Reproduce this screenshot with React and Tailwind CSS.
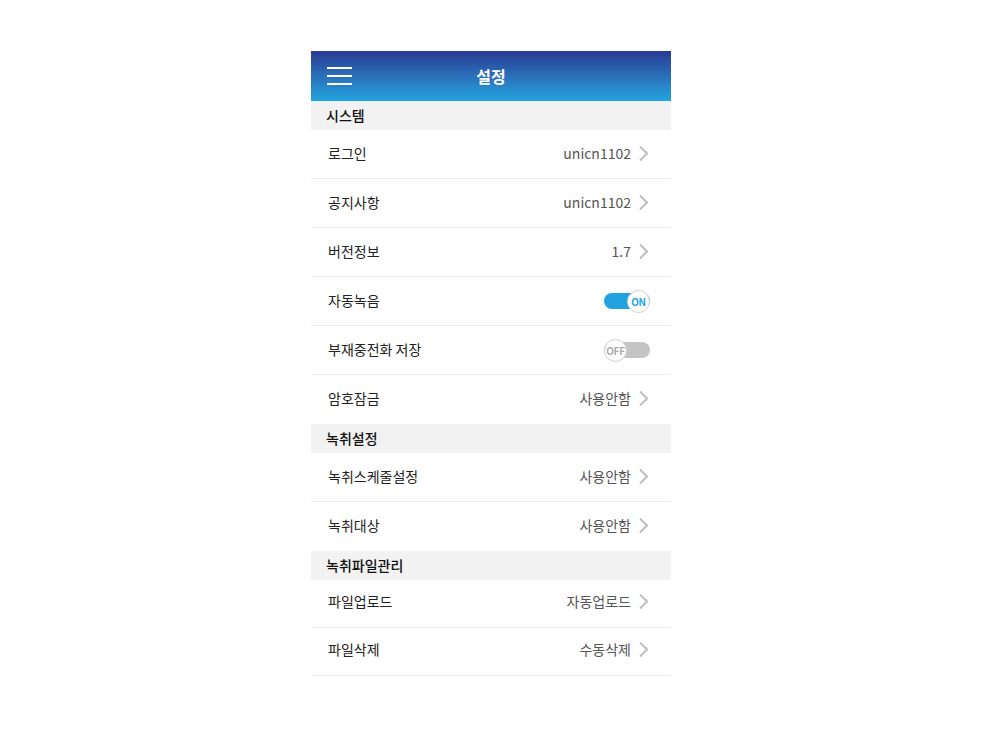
const font = { fontFamily: "'Noto Sans CJK KR', 'Noto Sans', sans-serif" };

function Chevron() {
  return (
    <svg width="11" height="17" viewBox="0 0 11 17" fill="none">
      <path d="M2 1.5 L9 8.5 L2 15.5" stroke="#bdbdbd" strokeWidth="2" />
    </svg>
  );
}

function Toggle({ on }) {
  return (
    <div className="relative w-[46px] h-[23px] flex items-center">
      <div
        className={`w-full h-[16px] rounded-full ${on ? "bg-[#22a3e0]" : "bg-[#c4c4c4]"}`}
      />
      <div
        className={`absolute top-0 ${on ? "right-0" : "left-0"} w-[23px] h-[23px] rounded-full bg-white border border-[#d0d0d0] flex items-center justify-center text-[10px] font-bold tracking-tight ${on ? "text-[#22a3e0]" : "text-[#aaa]"}`}
      >
        {on ? "ON" : "OFF"}
      </div>
    </div>
  );
}

function Row({ label, value, toggle, last, tight }) {
  return (
    <div
      className={`flex items-center justify-between pl-[17px] pr-[22px] ${tight ? "h-[48px] pb-[5px]" : "h-[49px] pb-[2px]"} ${last ? "" : "border-b border-[#ececec]"}`}
    >
      <span className="text-[14px] text-[#222]">{label}</span>
      {toggle !== undefined ? (
        <div className="mr-[-1px] mt-[2px]">
          <Toggle on={toggle} />
        </div>
      ) : (
        <div className="flex items-center gap-[7px]">
          <span className="text-[14px] text-[#555]">{value}</span>
          <Chevron />
        </div>
      )}
    </div>
  );
}

function Section({ title }) {
  return (
    <div className="h-[29px] bg-[#f2f2f2] flex items-center pl-[15px] pb-[1px] text-[14px] font-medium text-[#111]">
      {title}
    </div>
  );
}

export default function App() {
  return (
    <div className="w-[983px] h-[742px] bg-white flex justify-center pt-[51px]" style={font}>
      <div className="w-[360px] mr-[1px]">
        <div className="h-[50px] bg-gradient-to-b from-[#293a93] to-[#21a5de] flex items-center relative">
          <div className="absolute left-[16px] top-[16px] flex flex-col gap-[6px]">
            <div className="w-[25px] h-[2px] bg-white" />
            <div className="w-[25px] h-[2px] bg-white" />
            <div className="w-[25px] h-[2px] bg-white" />
          </div>
          <span className="w-full text-center text-white text-[16px] font-bold">설정</span>
        </div>

        <Section title="시스템" />
        <Row label="로그인" value="unicn1102" />
        <Row label="공지사항" value="unicn1102" />
        <Row label="버전정보" value="1.7" />
        <Row label="자동녹음" toggle={true} />
        <Row label="부재중전화 저장" toggle={false} />
        <Row label="암호잠금" value="사용안함" last />

        <Section title="녹취설정" />
        <Row label="녹취스케줄설정" value="사용안함" />
        <Row label="녹취대상" value="사용안함" last />

        <Section title="녹취파일관리" />
        <Row label="파일업로드" value="자동업로드" tight />
        <Row label="파일삭제" value="수동삭제" tight />
      </div>
    </div>
  );
}
